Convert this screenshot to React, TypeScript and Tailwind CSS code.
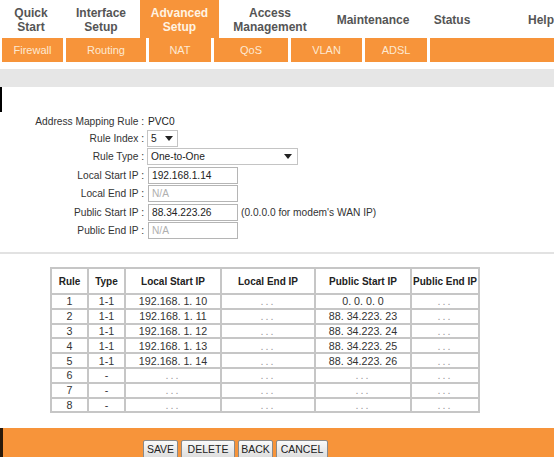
const topNav = [
  { label: ["Quick", "Start"], w: "w-[62px]" },
  { label: ["Interface", "Setup"], w: "w-[78px]" },
  { label: ["Advanced", "Setup"], w: "w-[79px]", active: true },
  { label: ["Access", "Management"], w: "w-[74px] ml-[14px]" },
  { label: ["Maintenance"], w: "w-[80px] ml-[26px]" },
  { label: ["Status"], w: "w-[78px]" },
];

const subNav = [
  { label: "Firewall", w: "w-[61px]" },
  { label: "Routing", w: "w-[80px]" },
  { label: "NAT", w: "w-[62px]" },
  { label: "QoS", w: "w-[74px]" },
  { label: "VLAN", w: "w-[71px]" },
  { label: "ADSL", w: "w-[62px]" },
];

const rules = [
  ["1", "1-1", "192.168. 1. 10", "0. 0. 0. 0"],
  ["2", "1-1", "192.168. 1. 11", "88. 34.223. 23"],
  ["3", "1-1", "192.168. 1. 12", "88. 34.223. 24"],
  ["4", "1-1", "192.168. 1. 13", "88. 34.223. 25"],
  ["5", "1-1", "192.168. 1. 14", "88. 34.223. 26"],
  ["6", "-", "", ""],
  ["7", "-", "", ""],
  ["8", "-", "", ""],
];

function Dots() {
  return <span className="text-[#9a9a9a] tracking-[2px]">...</span>;
}

function Caret() {
  return (
    <svg width="8" height="5" viewBox="0 0 8 5" className="shrink-0">
      <path d="M0 0h8L4 5z" fill="#222" />
    </svg>
  );
}

function FormRow({ label, children, h = "h-[18.5px]" }: { label: string; children: React.ReactNode; h?: string }) {
  return (
    <div className={`flex items-center ${h}`}>
      <div className="w-[147px] shrink-0 pr-[3px] text-right text-[#333]">{label} :</div>
      {children}
    </div>
  );
}

function TextBox({ value, placeholder }: { value?: string; placeholder?: string }) {
  return (
    <div className="ml-px flex h-[17px] w-[90px] items-center border border-[#b5b5b5] px-[3px]">
      {value ? <span className="text-[#222]">{value}</span> : <span className="text-[#b0b0b0]">{placeholder}</span>}
    </div>
  );
}

function Btn({ children, w }: { children: React.ReactNode; w: string }) {
  return (
    <div
      className={`flex h-[19px] ${w} items-center justify-center rounded-[2px] border border-[#8a8a8a] bg-gradient-to-b from-[#fafafa] to-[#dcdcdc] text-[10.5px] text-[#222]`}
    >
      {children}
    </div>
  );
}

export default function App() {
  return (
    <div className="h-[457px] w-[554px] overflow-hidden bg-white font-['Liberation_Sans',Arial,sans-serif] text-[10.2px]">
      {/* main nav */}
      <div className="flex h-[38px] items-stretch bg-white text-[12px] font-bold leading-[14.5px] text-[#555]">
        {topNav.map((item) => (
          <div
            key={item.label.join(" ")}
            className={`flex ${item.w} shrink-0 flex-col items-center justify-center pt-[2px] text-center ${
              item.active ? "bg-[#f7943a] text-[#fff3e2]" : ""
            }`}
          >
            {item.label.map((l) => (
              <span key={l} className="whitespace-nowrap">
                {l}
              </span>
            ))}
          </div>
        ))}
        <div className="flex flex-1 items-center justify-end pt-[2px]">Help</div>
      </div>

      {/* sub nav */}
      <div className="flex h-[24px] bg-white pl-[2px]">
        {subNav.map((item) => (
          <div
            key={item.label}
            className={`flex ${item.w} mr-[3px] shrink-0 items-center justify-center bg-[#f7943a] text-[11px] text-[#fde9d2]`}
          >
            {item.label}
          </div>
        ))}
        <div className="flex-1 bg-[#f7943a]" />
      </div>

      <div className="mt-[7px] h-[18px] bg-[#e6e6e6]" />

      <div className="flex">
        <div className="h-[25px] w-[2px] bg-black" />
      </div>

      {/* form */}
      <div className="flex flex-col">
        <FormRow label="Address Mapping Rule" h="h-[17px] pt-[2px]">
          <span className="pl-px text-[#222]">PVC0</span>
        </FormRow>
        <FormRow label="Rule Index">
          <div className="flex h-[17px] w-[31px] items-center justify-between border border-[#c4c4c4] pl-[3px] pr-[4px]">
            <span className="text-[#222]">5</span>
            <Caret />
          </div>
        </FormRow>
        <FormRow label="Rule Type">
          <div className="flex h-[17px] w-[151px] items-center justify-between border border-[#c4c4c4] pl-[3px] pr-[5px]">
            <span className="text-[#222]">One-to-One</span>
            <Caret />
          </div>
        </FormRow>
        <FormRow label="Local Start IP">
          <TextBox value="192.168.1.14" />
        </FormRow>
        <FormRow label="Local End IP">
          <TextBox placeholder="N/A" />
        </FormRow>
        <FormRow label="Public Start IP">
          <TextBox value="88.34.223.26" />
          <span className="ml-[3px] text-[#333]">(0.0.0.0 for modem's WAN IP)</span>
        </FormRow>
        <FormRow label="Public End IP">
          <TextBox placeholder="N/A" />
        </FormRow>
      </div>

      <div className="mt-[12px] h-[2px] bg-[#e2e2e2]" />

      {/* table */}
      <div className="mt-[13px] pl-[50px]">
        <table className="w-[430px] table-fixed border-collapse border-2 border-[#c6c6c6] text-center text-[10.7px] text-[#333]">
          <colgroup>
            <col className="w-[37px]" />
            <col className="w-[37px]" />
            <col className="w-[96px]" />
            <col className="w-[94px]" />
            <col className="w-[96px]" />
            <col />
          </colgroup>
          <thead>
            <tr className="h-[26px] text-[10px] text-[#222]">
              {["Rule", "Type", "Local Start IP", "Local End IP", "Public Start IP", "Public End IP"].map((h) => (
                <th key={h} className="whitespace-nowrap border-2 border-[#c6c6c6] font-bold">
                  {h}
                </th>
              ))}
            </tr>
          </thead>
          <tbody>
            {rules.map(([n, t, ls, ps]) => (
              <tr key={n} className="h-[14.8px] leading-[12px]">
                <td className="border-2 border-[#c6c6c6]">{n}</td>
                <td className="border-2 border-[#c6c6c6]">{t}</td>
                <td className="border-2 border-[#c6c6c6]">{ls || <Dots />}</td>
                <td className="border-2 border-[#c6c6c6]">
                  <Dots />
                </td>
                <td className="border-2 border-[#c6c6c6]">{ps || <Dots />}</td>
                <td className="border-2 border-[#c6c6c6]">
                  <Dots />
                </td>
              </tr>
            ))}
          </tbody>
        </table>
      </div>

      {/* footer */}
      <div className="mt-[15px] flex h-[40px] bg-[#f7943a]">
        <div className="w-[3px] bg-[#2a1a0a]" />
        <div className="flex gap-[3px] pl-[140px] pt-[12px]">
          <Btn w="w-[35px]">SAVE</Btn>
          <Btn w="w-[54px]">DELETE</Btn>
          <Btn w="w-[35px]">BACK</Btn>
          <Btn w="w-[52px]">CANCEL</Btn>
        </div>
      </div>
    </div>
  );
}
